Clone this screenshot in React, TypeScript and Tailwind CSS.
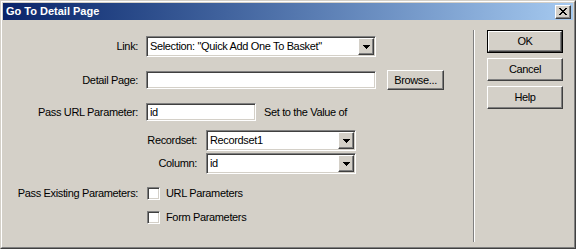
import React from 'react'

const sunken =
  'border border-t-[#808080] border-l-[#808080] border-b-white border-r-white shadow-[inset_1px_1px_0_#404040,inset_-1px_-1px_0_#d4d0c8] bg-white'
const raised =
  'border border-t-white border-l-white border-b-[#404040] border-r-[#404040] shadow-[inset_-1px_-1px_0_#808080] bg-[#d4d0c8]'

function Arrow() {
  return (
    <svg width="7" height="4" viewBox="0 0 7 4" shapeRendering="crispEdges">
      <path d="M0 0h7v1H0zM1 1h5v1H1zM2 2h3v1H2zM3 3h1v1H3z" fill="#000" />
    </svg>
  )
}

function Select({ value, width }: { value: string; width: string }) {
  return (
    <div className={`${sunken} ${width} flex h-[21px] items-center`}>
      <span className="flex-1 truncate pl-[3px] leading-none">{value}</span>
      <div className={`${raised} mr-[1px] flex h-[17px] w-[16px] items-center justify-center`}>
        <Arrow />
      </div>
    </div>
  )
}

function Button({ label, isDefault }: { label: string; isDefault?: boolean }) {
  if (isDefault) {
    return (
      <div className="h-[23px] w-[76px] border border-black">
        <div className={`${raised} flex h-full w-full items-center justify-center`}>{label}</div>
      </div>
    )
  }
  return (
    <div className={`${raised} flex h-[23px] w-[76px] items-center justify-center`}>{label}</div>
  )
}

function Checkbox({ label }: { label: string }) {
  return (
    <div className="flex h-[13px] items-center">
      <div className={`${sunken} h-[13px] w-[13px]`} />
      <span className="ml-[6px]">{label}</span>
    </div>
  )
}

export default function App() {
  return (
    <div
      className="h-[249px] w-[576px] overflow-hidden border border-t-[#d4d0c8] border-l-[#d4d0c8] border-b-[#404040] border-r-[#404040] bg-[#d4d0c8] text-[11px] tracking-[-0.35px] text-black"
      style={{ fontFamily: '"Liberation Sans", Arial, sans-serif' }}
    >
      <div className="flex h-full w-full flex-col border border-t-white border-l-white border-b-[#808080] border-r-[#808080] p-[1px]">
        {/* title bar */}
        <div className="flex h-[17px] items-center bg-gradient-to-r from-[#0a246a] to-[#a6caf0] pl-[3px] pr-[2px]">
          <span className="flex-1 text-[11px] font-bold tracking-normal text-white">Go To Detail Page</span>
          <div className={`${raised} flex h-[14px] w-[16px] items-center justify-center`}>
            <svg width="8" height="7" viewBox="0 0 8 7" shapeRendering="crispEdges">
              <path
                d="M0 0h2v1H0zM6 0h2v1H6zM1 1h2v1H1zM5 1h2v1H5zM2 2h4v1H2zM3 3h2v1H3zM2 4h4v1H2zM1 5h2v1H1zM5 5h2v1H5zM0 6h2v1H0zM6 6h2v1H6z"
                fill="#000"
              />
            </svg>
          </div>
        </div>

        <div className="flex flex-1">
          {/* form */}
          <div className="flex w-[470px] flex-col">
            <div className="mt-[16px] flex items-center">
              <div className="w-[135px] text-right">Link:</div>
              <div className="ml-[8px]">
                <Select value={'Selection: "Quick Add One To Basket"'} width="w-[230px]" />
              </div>
            </div>

            <div className="mt-[13px] flex h-[20px] items-center">
              <div className="w-[135px] text-right">Detail Page:</div>
              <div className={`${sunken} ml-[8px] h-[18px] w-[230px]`} />
              <div className={`${raised} ml-[11px] flex h-[20px] w-[57px] items-center justify-center`}>
                Browse...
              </div>
            </div>

            <div className="mt-[13px] flex h-[18px] items-center">
              <div className="w-[135px] text-right">Pass URL Parameter:</div>
              <div className={`${sunken} ml-[8px] flex h-[18px] w-[110px] items-center pl-[3px]`}>id</div>
              <span className="ml-[8px]">Set to the Value of</span>
            </div>

            <div className="mt-[9px] flex items-center">
              <div className="w-[194px] text-right">Recordset:</div>
              <div className="ml-[9px]">
                <Select value="Recordset1" width="w-[150px]" />
              </div>
            </div>

            <div className="mt-[2px] flex items-center">
              <div className="w-[194px] text-right">Column:</div>
              <div className="ml-[9px]">
                <Select value="id" width="w-[150px]" />
              </div>
            </div>

            <div className="mt-[11px] flex items-center">
              <div className="w-[135px] text-right">Pass Existing Parameters:</div>
              <div className="ml-[9px]">
                <Checkbox label="URL Parameters" />
              </div>
            </div>

            <div className="mt-[9px] flex items-center">
              <div className="ml-[144px]">
                <Checkbox label="Form Parameters" />
              </div>
            </div>
          </div>

          {/* separator */}
          <div className="mb-[4px] mt-[10px] w-[2px] border-l border-l-[#808080] border-r border-r-white" />

          {/* buttons */}
          <div className="ml-[12px] mt-[10px] flex flex-col gap-[5px]">
            <Button label="OK" isDefault />
            <Button label="Cancel" />
            <Button label="Help" />
          </div>
        </div>
      </div>
    </div>
  )
}
